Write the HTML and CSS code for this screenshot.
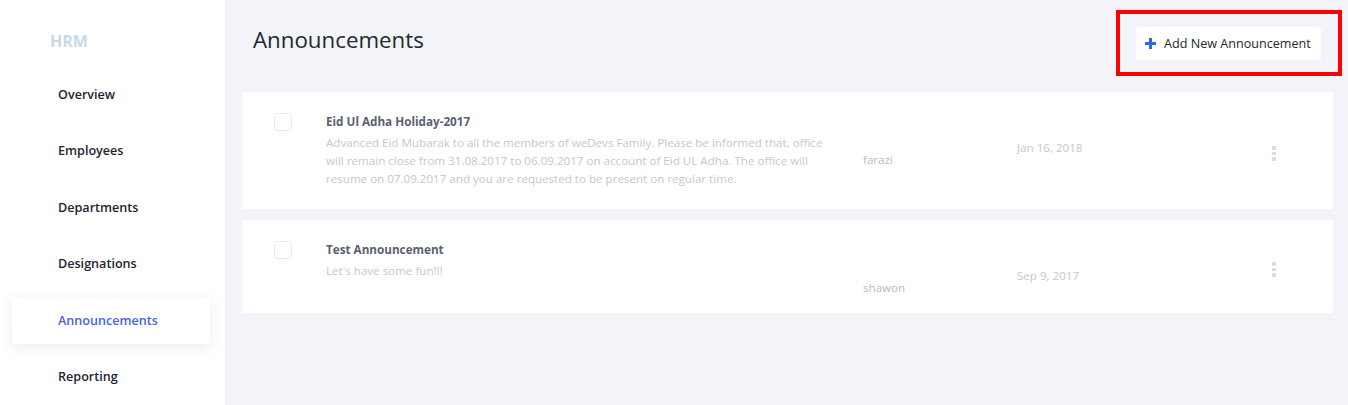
FILE: index.html
```html
<!DOCTYPE html>
<html lang="en">
<head>
<meta charset="utf-8">
<title>HRM - Announcements</title>
<link rel="stylesheet" href="styles.css">
</head>
<body>
<div class="app">
  <aside class="sidebar">
    <div class="brand">HRM</div>
    <nav class="nav">
      <a class="nav-item">Overview</a>
      <a class="nav-item">Employees</a>
      <a class="nav-item">Departments</a>
      <a class="nav-item">Designations</a>
      <a class="nav-item active">Announcements</a>
      <a class="nav-item">Reporting</a>
    </nav>
  </aside>
  <main class="main">
    <header class="header">
      <h1 class="title">Announcements</h1>
      <div class="highlight">
        <button class="btn-add">
          <svg class="plus" width="11" height="11" viewBox="0 0 11 11"><rect x="4" y="0" width="3" height="11" fill="#2c6bd6"/><rect x="0" y="4" width="11" height="3" fill="#2c6bd6"/></svg>
          <span>Add New Announcement</span>
        </button>
      </div>
    </header>
    <section class="list">
      <div class="card">
        <div class="cell-check"><span class="checkbox"></span></div>
        <div class="cell-content">
          <div class="a-title">Eid Ul Adha Holiday-2017</div>
          <div class="a-desc">Advanced Eid Mubarak to all the members of weDevs Family. Please be informed that, office will remain close from 31.08.2017 to 06.09.2017 on account of Eid UL Adha. The office will resume on 07.09.2017 and you are requested to be present on regular time.</div>
        </div>
        <div class="cell-author">farazi</div>
        <div class="cell-date">Jan 16, 2018</div>
        <div class="cell-action"><span class="kebab"><i></i><i></i><i></i></span></div>
      </div>
      <div class="card">
        <div class="cell-check"><span class="checkbox"></span></div>
        <div class="cell-content">
          <div class="a-title">Test Announcement</div>
          <div class="a-desc">Let's have some fun!!!</div>
        </div>
        <div class="cell-author">shawon</div>
        <div class="cell-date">Sep 9, 2017</div>
        <div class="cell-action"><span class="kebab"><i></i><i></i><i></i></span></div>
      </div>
    </section>
  </main>
</div>
</body>
</html>
```

FILE: styles.css
```css
* { box-sizing: border-box; }
html, body { margin: 0; padding: 0; }
body {
  font-family: "Open Sans", "Noto Sans", sans-serif;
  background: #f3f4f9;
  color: #23282d;
  width: 1348px;
  height: 405px;
  overflow: hidden;
}
.app {
  display: flex;
  height: 405px;
}
.sidebar {
  width: 226px;
  flex: none;
  background: #ffffff;
  border-right: 1px solid #eceef4;
  padding-top: 29px;
}
.brand {
  padding-left: 50px;
  font-size: 16px;
  font-weight: 700;
  line-height: 24px;
  color: #c8d9e6;
  margin-bottom: 17.5px;
}
.nav {
  display: flex;
  flex-direction: column;
  gap: 9.5px;
}
.nav-item {
  display: flex;
  align-items: center;
  height: 47px;
  margin: 0 15px 0 12px;
  padding-left: 46px;
  font-size: 12.6px;
  font-weight: 600;
  color: #1f2530;
  border-radius: 3px;
}
.nav-item.active {
  background: #ffffff;
  color: #4566d6;
  box-shadow: 0 3px 14px rgba(90, 100, 160, 0.12);
}
.main {
  flex: 1;
  padding: 10px 15px 0 16px;
}
.header {
  display: flex;
  justify-content: space-between;
  align-items: flex-start;
  margin-right: -9px;
  margin-bottom: 16px;
}
.title {
  margin: 15px 0 0 11px;
  font-size: 22.3px;
  font-weight: 400;
  line-height: 30px;
  color: #23282d;
}
.highlight {
  border: 4px solid #ff0000;
  padding: 13px 17px 12px 16px;
}
.btn-add {
  display: flex;
  align-items: center;
  gap: 8px;
  height: 33px;
  width: 185px;
  padding: 0 0 0 9px;
  border: none;
  border-radius: 3px;
  background: #ffffff;
  font-family: inherit;
  font-size: 12.6px;
  color: #23282d;
}
.plus { flex: none; }
.list {
  display: flex;
  flex-direction: column;
  gap: 11px;
}
.card {
  display: grid;
  grid-template-columns: 84px 537px 154px 254px 1fr;
  align-items: start;
  background: #ffffff;
  padding: 20px 0 16px 0;
}
.cell-check { padding: 1px 0 0 32px; }
.checkbox {
  display: block;
  width: 18px;
  height: 18px;
  border: 1px solid #e9ebf0;
  border-radius: 3px;
}
.cell-content { padding: 0 30px 5px 0; }
.a-title {
  font-size: 11.7px;
  font-weight: 700;
  line-height: 18px;
  color: #5a5f73;
}
.a-desc {
  margin-top: 4px;
  font-size: 11.6px;
  line-height: 18px;
  color: #c3c7d4;
}
.cell-author {
  padding-top: 39px;
  font-size: 11.6px;
  line-height: 18px;
  color: #b6bac6;
}
.cell-date {
  padding-top: 27px;
  font-size: 11.6px;
  line-height: 18px;
  color: #c3c7d3;
}
.cell-action {
  align-self: center;
  padding-left: 1px;
  padding-top: 2px;
}
.kebab {
  display: flex;
  flex-direction: column;
  gap: 2px;
  width: 4px;
}
.kebab i {
  display: block;
  width: 4px;
  height: 3.5px;
  background: #d9dde6;
}
```
